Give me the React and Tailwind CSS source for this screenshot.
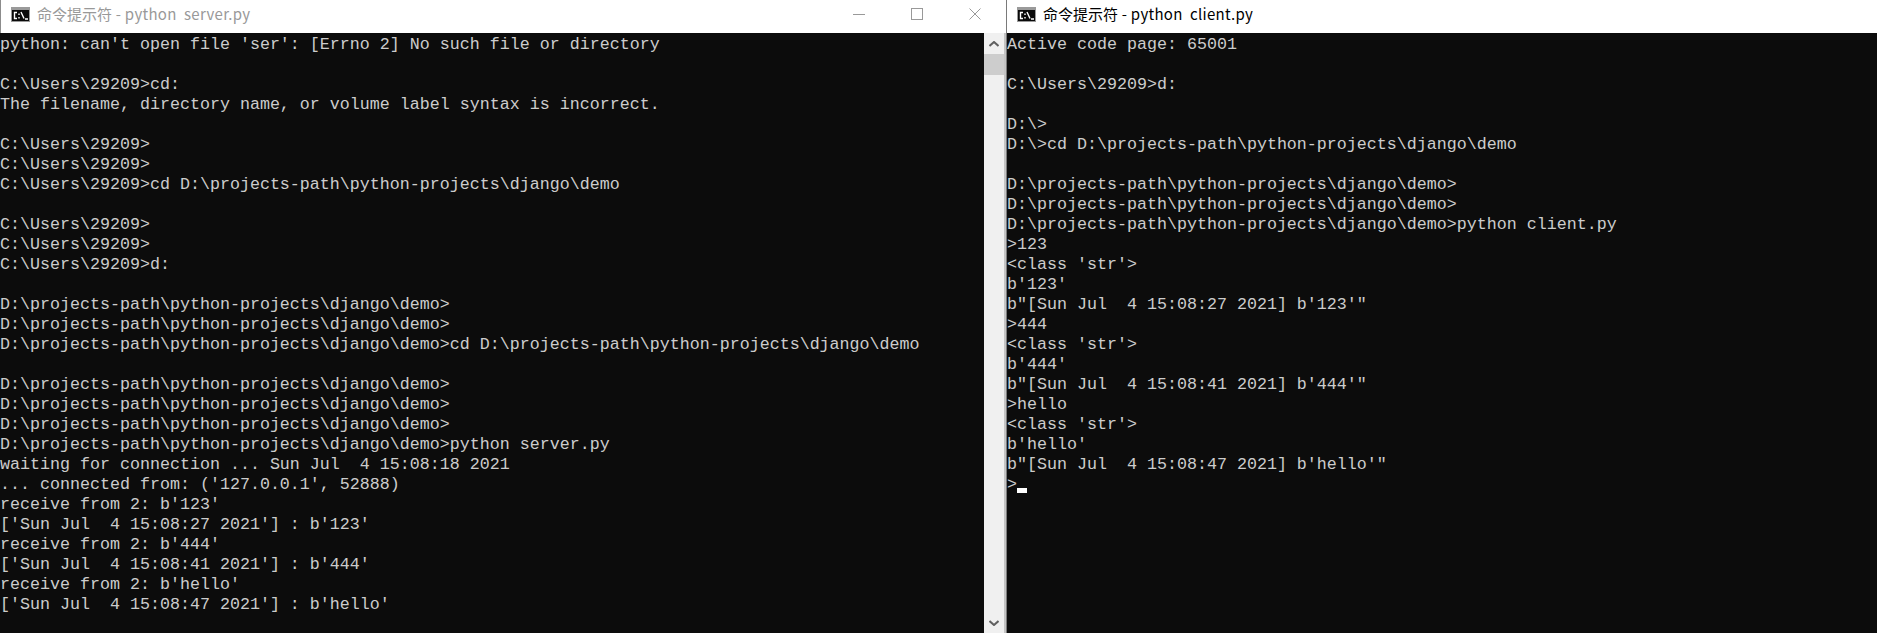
const folder = "D:\\projects-path\\python-projects\\django\\demo";
const user = "C:\\Users\\29209>";

const leftLines = [
  "python: can't open file 'ser': [Errno 2] No such file or directory",
  "",
  user + "cd:",
  "The filename, directory name, or volume label syntax is incorrect.",
  "",
  user,
  user,
  user + "cd " + folder,
  "",
  user,
  user,
  user + "d:",
  "",
  folder + ">",
  folder + ">",
  folder + ">cd " + folder,
  "",
  folder + ">",
  folder + ">",
  folder + ">",
  folder + ">python server.py",
  "waiting for connection ... Sun Jul  4 15:08:18 2021",
  "... connected from: ('127.0.0.1', 52888)",
  "receive from 2: b'123'",
  "['Sun Jul  4 15:08:27 2021'] : b'123'",
  "receive from 2: b'444'",
  "['Sun Jul  4 15:08:41 2021'] : b'444'",
  "receive from 2: b'hello'",
  "['Sun Jul  4 15:08:47 2021'] : b'hello'",
];

const rightLines = [
  "Active code page: 65001",
  "",
  user + "d:",
  "",
  "D:\\>",
  "D:\\>cd " + folder,
  "",
  folder + ">",
  folder + ">",
  folder + ">python client.py",
  ">123",
  "<class 'str'>",
  "b'123'",
  "b\"[Sun Jul  4 15:08:27 2021] b'123'\"",
  ">444",
  "<class 'str'>",
  "b'444'",
  "b\"[Sun Jul  4 15:08:41 2021] b'444'\"",
  ">hello",
  "<class 'str'>",
  "b'hello'",
  "b\"[Sun Jul  4 15:08:47 2021] b'hello'\"",
];

function CmdIcon() {
  return (
    <svg width="19" height="15" viewBox="0 0 19 15" className="shrink-0">
      <rect x="0" y="0" width="19" height="15" fill="#9a9a9a" />
      <rect x="1" y="3" width="17" height="11" fill="#0a0a0a" />
      <path d="M6 5.5H3.5V11.5H6M8 6.5V8M8 10V11.5M10 5L13 11.5M14 12H17" stroke="#ffffff" strokeWidth="1.4" fill="none" />
    </svg>
  );
}

function Title({ name, className }) {
  return (
    <div className="flex items-center gap-[7px] pl-[10px] h-[29px]">
      <CmdIcon />
      <span className={"whitespace-pre text-[15px] font-['Noto_Sans_CJK_SC','Noto_Sans',sans-serif] " + className}>
        命令提示符
        <span className="tracking-[0.3px]">{" - python  " + name}</span>
      </span>
    </div>
  );
}

function Lines({ lines }) {
  return lines.map((line, i) => (
    <div key={i} className="h-[20px] leading-[24px] whitespace-pre">
      {line}
    </div>
  ));
}

function WindowButtons() {
  return (
    <div className="flex pr-[2px]">
      <div className="w-[58px] h-[27px] flex items-center justify-center">
        <svg width="12" height="12" viewBox="0 0 12 12">
          <path d="M0 6.5H12" stroke="#999999" />
        </svg>
      </div>
      <div className="w-[58px] h-[27px] flex items-center justify-center">
        <svg width="12" height="12" viewBox="0 0 12 12">
          <rect x="0.5" y="0.5" width="11" height="11" fill="none" stroke="#999999" />
        </svg>
      </div>
      <div className="w-[58px] h-[27px] flex items-center justify-center">
        <svg width="12" height="12" viewBox="0 0 12 12">
          <path d="M0.5 0.5L11.5 11.5M11.5 0.5L0.5 11.5" stroke="#999999" />
        </svg>
      </div>
    </div>
  );
}

const mono = "font-['Liberation_Mono',monospace] text-[16.67px] text-[#cccccc]";

export default function App() {
  return (
    <div className="w-[1877px] h-[633px] flex overflow-hidden bg-[#0c0c0c]">
      <div className="w-[1006px] shrink-0 flex flex-col border-l border-l-[#8c8c8c]">
        <div className="h-[33px] shrink-0 bg-white flex items-start justify-between">
          <Title name="server.py" className="text-[#999999]" />
          <WindowButtons />
        </div>
        <div className="flex-1 flex min-h-0">
          <div className={"flex-1 min-w-0 overflow-hidden bg-[#0c0c0c] -ml-px " + mono}>
            <Lines lines={leftLines} />
          </div>
          <div className="w-[20px] shrink-0 bg-[#f0f0f0] flex flex-col justify-between">
            <div className="flex flex-col">
              <div className="h-[21px] flex items-center justify-center">
                <svg width="10" height="6" viewBox="0 0 10 6">
                  <path d="M0.5 5L5 1L9.5 5" fill="none" stroke="#606060" strokeWidth="2" />
                </svg>
              </div>
              <div className="h-[21px] bg-[#cdcdcd]" />
            </div>
            <div className="h-[21px] flex items-center justify-center">
              <svg width="10" height="6" viewBox="0 0 10 6">
                <path d="M0.5 1L5 5L9.5 1" fill="none" stroke="#606060" strokeWidth="2" />
              </svg>
            </div>
          </div>
          <div className="w-[2px] shrink-0 bg-[#c4c4c4]" />
        </div>
      </div>
      <div className="flex-1 flex flex-col border-l border-l-[#7a7a7a]">
        <div className="h-[33px] shrink-0 bg-white">
          <Title name="client.py" className="text-black" />
        </div>
        <div className={"flex-1 overflow-hidden " + mono}>
          <Lines lines={rightLines} />
          <div className="h-[20px] leading-[24px] whitespace-pre flex">
            <span>&gt;</span>
            <span className="w-[10px] h-[5px] mt-[15px] bg-white" />
          </div>
        </div>
      </div>
    </div>
  );
}
